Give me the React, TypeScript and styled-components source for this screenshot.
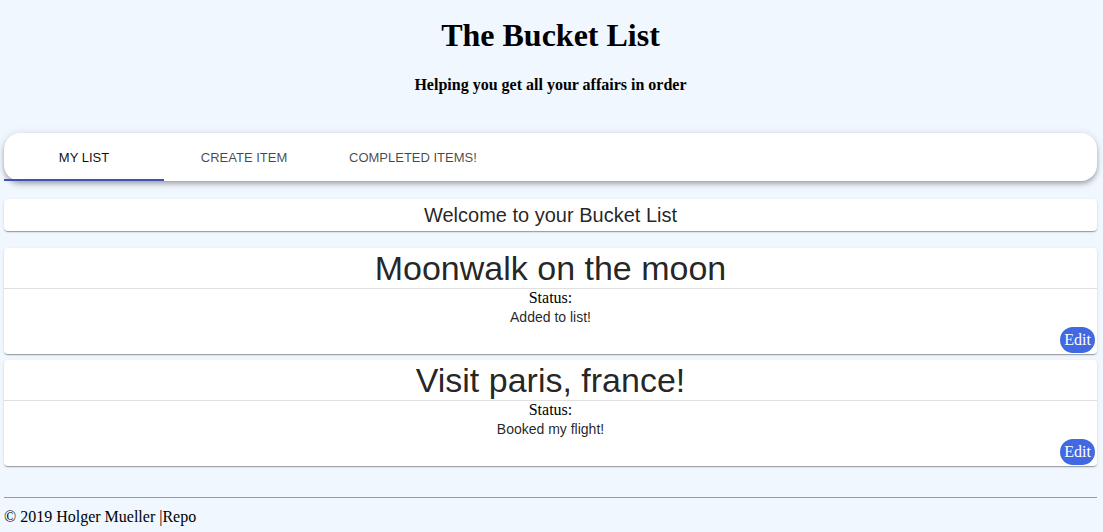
import React from "react";
import styled, { createGlobalStyle } from "styled-components";

const GlobalStyle = createGlobalStyle`
  html, body {
    margin: 0;
    padding: 0;
    background: #f0f7fe;
    font-family: "Liberation Serif", "Times New Roman", serif;
    font-size: 16px;
    color: #000;
  }
`;

const Page = styled.div`
  padding: 0 6px 0 4px;
  display: flex;
  flex-direction: column;
`;

const Header = styled.header`
  padding-top: 17px;
  text-align: center;
`;

const Title = styled.h1`
  margin: 0;
  font-size: 32px;
  line-height: 37px;
  font-weight: bold;
`;

const Subtitle = styled.h4`
  margin: 22px 0 0;
  font-size: 16px;
  line-height: 18px;
  font-weight: bold;
`;

const TabBar = styled.nav`
  margin-top: 39px;
  height: 48px;
  background: #fff;
  border-radius: 16px;
  display: flex;
  box-shadow: 0px 2px 4px -1px rgba(0, 0, 0, 0.2), 0px 4px 5px 0px rgba(0, 0, 0, 0.14),
    0px 1px 10px 0px rgba(0, 0, 0, 0.12);
`;

const Tab = styled.button<{ $active?: boolean }>`
  min-width: 160px;
  padding: 0 25px;
  height: 48px;
  border: 0;
  background: transparent;
  font-family: "Liberation Sans", Arial, sans-serif;
  font-size: 13px;
  text-transform: uppercase;
  letter-spacing: 0;
  color: ${(p) => (p.$active ? "rgba(0,0,0,0.95)" : "rgba(0,0,0,0.72)")};
  box-shadow: ${(p) => (p.$active ? "inset 0 -2px 0 #3f51b5" : "none")};
  display: flex;
  align-items: center;
  justify-content: center;
  cursor: pointer;
`;

const Paper = styled.section`
  background: #fff;
  border-radius: 4px;
  box-shadow: 0px 2px 1px -1px rgba(0, 0, 0, 0.2), 0px 1px 1px 0px rgba(0, 0, 0, 0.14),
    0px 1px 3px 0px rgba(0, 0, 0, 0.12);
`;

const Welcome = styled(Paper)`
  margin-top: 18px;
  height: 32px;
  display: flex;
  align-items: center;
  justify-content: center;
  font-family: "Liberation Sans", Arial, sans-serif;
  font-size: 20px;
  color: rgba(0, 0, 0, 0.87);
`;

const List = styled.div`
  margin-top: 17px;
  display: flex;
  flex-direction: column;
  gap: 6px;
`;

const Card = styled(Paper)`
  display: flex;
  flex-direction: column;
  text-align: center;
  padding-bottom: 1px;
`;

const CardTitle = styled.h2`
  margin: 0;
  height: 40px;
  line-height: 40px;
  font-family: "Liberation Sans", Arial, sans-serif;
  font-weight: 400;
  font-size: 34px;
  color: rgba(0, 0, 0, 0.87);
  border-bottom: 1px solid rgba(0, 0, 0, 0.12);
`;

const StatusLabel = styled.div`
  font-size: 16px;
  line-height: 18px;
`;

const StatusText = styled.div`
  font-family: "Liberation Sans", Arial, sans-serif;
  font-size: 14px;
  line-height: 20px;
  color: rgba(0, 0, 0, 0.87);
`;

const Actions = styled.div`
  display: flex;
  justify-content: flex-end;
  padding-right: 2px;
`;

const EditButton = styled.button`
  height: 26px;
  padding: 0 4px;
  border: 0;
  border-radius: 13px;
  background: #4169e1;
  color: #fff;
  font-family: "Liberation Serif", "Times New Roman", serif;
  font-size: 16px;
  line-height: 26px;
  cursor: pointer;
`;

const Footer = styled.footer`
  margin-top: 31px;
  border-top: 1px solid #9a9a9a;
  padding-top: 10px;
  font-size: 16px;
  line-height: 18px;
`;

const items = [
  { title: "Moonwalk on the moon", status: "Added to list!" },
  { title: "Visit paris, france!", status: "Booked my flight!" },
];

export default function App() {
  return (
    <>
      <GlobalStyle />
      <Page>
        <Header>
          <Title>The Bucket List</Title>
          <Subtitle>Helping you get all your affairs in order</Subtitle>
        </Header>
        <TabBar>
          <Tab $active>My List</Tab>
          <Tab>Create Item</Tab>
          <Tab>Completed Items!</Tab>
        </TabBar>
        <Welcome>Welcome to your Bucket List</Welcome>
        <List>
          {items.map((it) => (
            <Card key={it.title}>
              <CardTitle>{it.title}</CardTitle>
              <StatusLabel>Status:</StatusLabel>
              <StatusText>{it.status}</StatusText>
              <Actions>
                <EditButton>Edit</EditButton>
              </Actions>
            </Card>
          ))}
        </List>
        <Footer>© 2019 Holger Mueller |Repo</Footer>
      </Page>
    </>
  );
}
